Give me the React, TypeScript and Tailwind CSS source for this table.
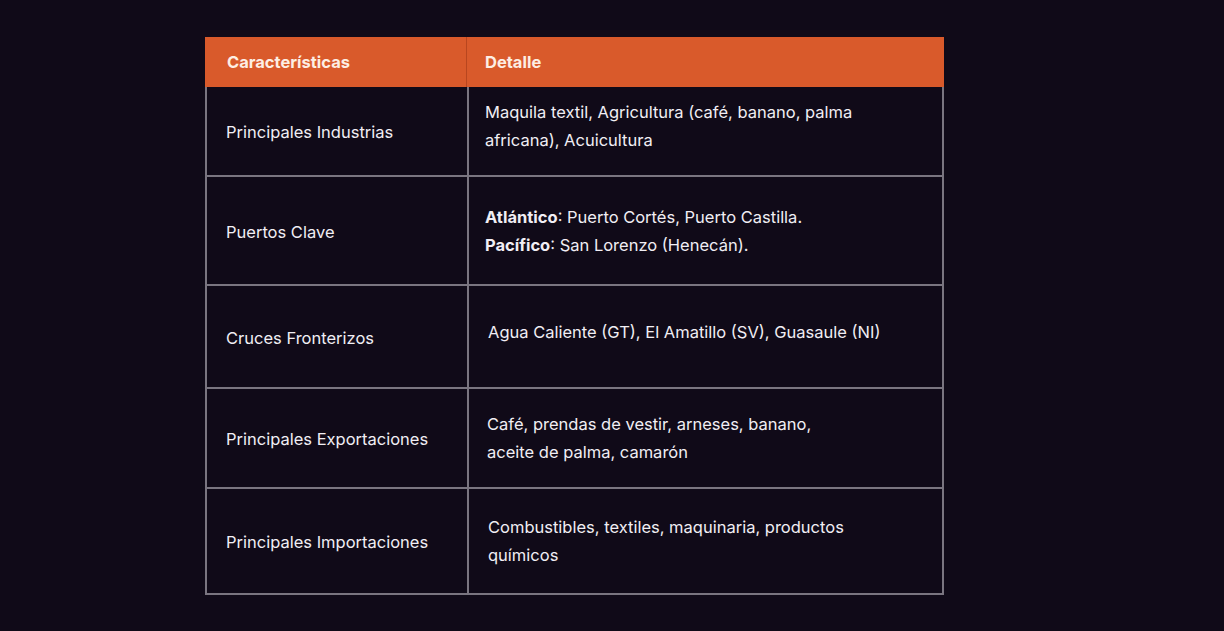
import React from 'react';

type Row = {
  label: string;
  detail: React.ReactNode;
  h: string;
  pad: string;
};

const rows: Row[] = [
  {
    label: 'Principales Industrias',
    detail: (
      <>
        Maquila textil, Agricultura (café, banano, palma
        <br />
        africana), Acuicultura
      </>
    ),
    h: 'h-[90px]',
    pad: 'pl-[16px] pt-[11px]',
  },
  {
    label: 'Puertos Clave',
    detail: (
      <>
        <b className="font-bold">Atlántico</b>: Puerto Cortés, Puerto Castilla.
        <br />
        <b className="font-bold">Pacífico</b>: San Lorenzo (Henecán).
      </>
    ),
    h: 'h-[109px]',
    pad: 'pl-[16px] pt-[26px]',
  },
  {
    label: 'Cruces Fronterizos',
    detail: <>Agua Caliente (GT), El Amatillo (SV), Guasaule (NI)</>,
    h: 'h-[103px]',
    pad: 'pl-[19px] pt-[32px]',
  },
  {
    label: 'Principales Exportaciones',
    detail: (
      <>
        Café, prendas de vestir, arneses, banano,
        <br />
        aceite de palma, camarón
      </>
    ),
    h: 'h-[100px]',
    pad: 'pl-[18px] pt-[21px]',
  },
  {
    label: 'Principales Importaciones',
    detail: (
      <>
        Combustibles, textiles, maquinaria, productos
        <br />
        químicos
      </>
    ),
    h: 'h-[106px]',
    pad: 'pl-[19px] pt-[24px]',
  },
];

const App: React.FC = () => {
  return (
    <div
      className="min-h-screen w-full bg-[#100a18] pl-[205px] pt-[37px]"
      style={{ fontFamily: 'Inter, "Liberation Sans", sans-serif' }}
    >
      <div className="w-[739px] text-[16.5px] leading-[28px] text-[#f1eef4]">
        {/* Header */}
        <div className="grid h-[50px] grid-cols-[262px_1fr] bg-[#d95a2b] font-bold text-[#fdeee4]">
          <div className="flex items-center border-r border-[#b8461f] pl-[22px]">Características</div>
          <div className="flex items-center pl-[18px]">Detalle</div>
        </div>

        {/* Body */}
        {rows.map((row, i) => (
          <div
            key={i}
            className={`grid grid-cols-[262px_1fr] border-x-2 border-b-2 border-[#7a7580] ${row.h}`}
          >
            <div className="flex items-center border-r-2 border-[#7a7580] pl-[19px] pt-[2px]">{row.label}</div>
            <div className={row.pad}>{row.detail}</div>
          </div>
        ))}
      </div>
    </div>
  );
};

export default App;
